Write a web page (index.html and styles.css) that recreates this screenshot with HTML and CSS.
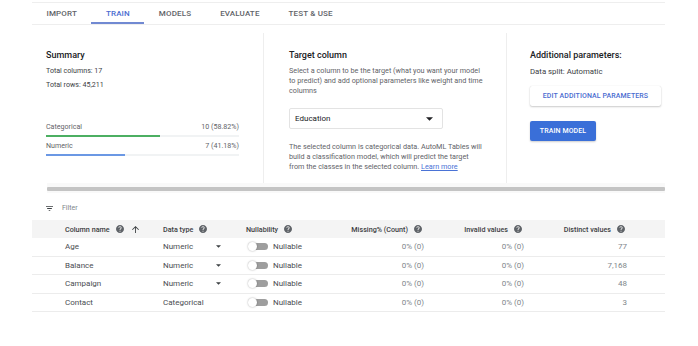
FILE: index.html
```html
<!DOCTYPE html>
<html>
<head>
<meta charset="utf-8">
<link rel="stylesheet" href="styles.css">
</head>
<body>
<div class="page">
  <nav class="tabs">
    <div class="tab">IMPORT</div>
    <div class="tab active">TRAIN</div>
    <div class="tab">MODELS</div>
    <div class="tab">EVALUATE</div>
    <div class="tab">TEST &amp; USE</div>
  </nav>

  <section class="panels">
    <div class="panel summary">
      <div class="title">Summary</div>
      <div class="meta m1">Total columns: 17</div>
      <div class="meta m2">Total rows: 45,211</div>
      <div class="stat s1"><span>Categorical</span><span>10 (58.82%)</span></div>
      <div class="bar"><div class="fill green" style="width:58.82%"></div></div>
      <div class="stat s2"><span>Numeric</span><span>7 (41.18%)</span></div>
      <div class="bar"><div class="fill blue" style="width:41.18%"></div></div>
    </div>

    <div class="panel target">
      <div class="title">Target column</div>
      <p class="desc d1">Select a column to be the target (what you want your model to predict) and add optional parameters like weight and time columns</p>
      <div class="select">
        <span>Education</span>
        <svg class="caret" viewBox="7 10 10 5" width="7" height="4"><path d="M7 10l5 5 5-5z"/></svg>
      </div>
      <p class="desc d2">The selected column is categorical data. AutoML Tables will build a classification model, which will predict the target from the classes in the selected column. <a class="link">Learn more</a></p>
    </div>

    <div class="panel params">
      <div class="title">Additional parameters:</div>
      <div class="meta split">Data split: Automatic</div>
      <div class="btn outline">EDIT ADDITIONAL PARAMETERS</div>
      <div class="btn primary">TRAIN MODEL</div>
    </div>
  </section>

  <div class="scroll"><div class="thumb"></div></div>

  <div class="filter">
    <svg viewBox="3 6 18 12" width="7" height="5"><path d="M10 18h4v-2h-4v2zM3 6v2h18V6H3zm3 7h12v-2H6v2z"/></svg>
    <span>Filter</span>
  </div>

  <div class="table">
    <div class="thead">
      <div class="th">Column name
        <svg class="help" viewBox="2 2 20 20"><path d="M12 2C6.48 2 2 6.48 2 12s4.48 10 10 10 10-4.48 10-10S17.52 2 12 2zm1 17h-2v-2h2v2zm2.07-7.75l-.9.92C13.45 12.9 13 13.5 13 15h-2v-.5c0-1.1.45-2.1 1.170-2.83l1.24-1.26c.37-.36.59-.86.59-1.41 0-1.1-.9-2-2-2s-2 .9-2 2H8c0-2.21 1.79-4 4-4s4 1.79 4 4c0 .88-.36 1.68-.93 2.25z"/></svg>
        <svg class="arrow" viewBox="4 4 16 16"><path d="M4 12l1.410 1.41L11 7.830V20h2V7.830l5.580 5.59L20 12l-8-8-8 8z"/></svg>
      </div>
      <div class="th">Data type
        <svg class="help" viewBox="2 2 20 20"><path d="M12 2C6.48 2 2 6.48 2 12s4.48 10 10 10 10-4.48 10-10S17.52 2 12 2zm1 17h-2v-2h2v2zm2.07-7.75l-.9.92C13.45 12.9 13 13.5 13 15h-2v-.5c0-1.1.45-2.1 1.170-2.83l1.24-1.26c.37-.36.59-.86.59-1.41 0-1.1-.9-2-2-2s-2 .9-2 2H8c0-2.21 1.79-4 4-4s4 1.790 4 4c0 .88-.36 1.68-.93 2.25z"/></svg>
      </div>
      <div class="th">Nullability
        <svg class="help" viewBox="2 2 20 20"><path d="M12 2C6.48 2 2 6.48 2 12s4.48 10 10 10 10-4.48 10-10S17.52 2 12 2zm1 17h-2v-2h2v2zm2.07-7.75l-.9.92C13.45 12.9 13 13.5 13 15h-2v-.5c0-1.1.45-2.1 1.170-2.83l1.24-1.26c.37-.36.59-.86.59-1.41 0-1.1-.9-2-2-2s-2 .9-2 2H8c0-2.21 1.79-4 4-4s4 1.79 4 4c0 .88-.36 1.68-.93 2.25z"/></svg>
      </div>
      <div class="th right">Missing% (Count)
        <svg class="help" viewBox="2 2 20 20"><path d="M12 2C6.48 2 2 6.48 2 12s4.48 10 10 10 10-4.48 10-10S17.52 2 12 2zm1 17h-2v-2h2v2zm2.07-7.75l-.9.92C13.45 12.9 13 13.5 13 15h-2v-.5c0-1.1.45-2.1 1.170-2.83l1.24-1.26c.37-.36.59-.86.59-1.41 0-1.1-.9-2-2-2s-2 .9-2 2H8c0-2.21 1.79-4 4-4s4 1.79 4 4c0 .88-.36 1.68-.93 2.25z"/></svg>
      </div>
      <div class="th right">Invalid values
        <svg class="help" viewBox="2 2 20 20"><path d="M12 2C6.48 2 2 6.48 2 12s4.48 10 10 10 10-4.48 10-10S17.52 2 12 2zm1 17h-2v-2h2v2zm2.07-7.75l-.9.92C13.45 12.9 13 13.5 13 15h-2v-.5c0-1.1.45-2.1 1.170-2.83l1.24-1.26c.37-.36.59-.86.59-1.41 0-1.1-.9-2-2-2s-2 .9-2 2H8c0-2.21 1.79-4 4-4s4 1.79 4 4c0 .88-.36 1.68-.93 2.25z"/></svg>
      </div>
      <div class="th right">Distinct values
        <svg class="help" viewBox="2 2 20 20"><path d="M12 2C6.48 2 2 6.48 2 12s4.48 10 10 10 10-4.48 10-10S17.52 2 12 2zm1 17h-2v-2h2v2zm2.07-7.75l-.9.92C13.45 12.9 13 13.5 13 15h-2v-.5c0-1.1.45-2.1 1.170-2.83l1.24-1.26c.37-.36.59-.86.59-1.41 0-1.1-.9-2-2-2s-2 .9-2 2H8c0-2.21 1.79-4 4-4s4 1.79 4 4c0 .88-.36 1.68-.93 2.25z"/></svg>
      </div>
    </div>

    <div class="row">
      <div class="name">Age</div>
      <div class="dtype"><span>Numeric</span><svg viewBox="7 10 10 5" width="5" height="3"><path d="M7 10l5 5 5-5z"/></svg></div>
      <div class="null"><span class="toggle"><span class="knob"></span><span class="track"></span></span><span>Nullable</span></div>
      <div class="num">0% (0)</div>
      <div class="num">0% (0)</div>
      <div class="num">77</div>
    </div>
    <div class="row">
      <div class="name">Balance</div>
      <div class="dtype"><span>Numeric</span><svg viewBox="7 10 10 5" width="5" height="3"><path d="M7 10l5 5 5-5z"/></svg></div>
      <div class="null"><span class="toggle"><span class="knob"></span><span class="track"></span></span><span>Nullable</span></div>
      <div class="num">0% (0)</div>
      <div class="num">0% (0)</div>
      <div class="num">7,168</div>
    </div>
    <div class="row">
      <div class="name">Campaign</div>
      <div class="dtype"><span>Numeric</span><svg viewBox="7 10 10 5" width="5" height="3"><path d="M7 10l5 5 5-5z"/></svg></div>
      <div class="null"><span class="toggle"><span class="knob"></span><span class="track"></span></span><span>Nullable</span></div>
      <div class="num">0% (0)</div>
      <div class="num">0% (0)</div>
      <div class="num">48</div>
    </div>
    <div class="row">
      <div class="name">Contact</div>
      <div class="dtype"><span>Categorical</span></div>
      <div class="null"><span class="toggle"><span class="knob"></span><span class="track"></span></span><span>Nullable</span></div>
      <div class="num">0% (0)</div>
      <div class="num">0% (0)</div>
      <div class="num">3</div>
    </div>
  </div>
</div>
</body>
</html>
```

FILE: styles.css
```css
* { box-sizing: border-box; }

body {
  margin: 0;
  background: #ffffff;
  color: #3c4043;
  font-family: Roboto, "Noto Sans", "Liberation Sans", sans-serif;
}

.page {
  width: 665px;
  padding-left: 32px;
}

/* Tabs */
.tabs {
  display: flex;
  height: 23px;
  margin-top: 2px;
  border-top: 1px solid #eeeeee;
  border-bottom: 1px solid #eeeeee;
}

.tab {
  display: flex;
  align-items: center;
  padding: 1px 14.5px 0;
  font-size: 8px;
  font-weight: 500;
  letter-spacing: 0.15px;
  color: #5f6368;
  border-bottom: 2px solid transparent;
}

.tab.active {
  color: #4a6cd0;
  border-bottom-color: #7189d2;
}

/* Panels */
.panels {
  display: grid;
  grid-template-columns: 231px 243px 159px;
  height: 150px;
  margin-top: 8px;
}

.panel {
  padding-top: 16px;
}

.summary {
  padding-left: 14px;
  padding-right: 24px;
}

.target {
  padding-left: 25px;
  border-left: 1px solid #eeeeee;
}

.params {
  padding-left: 23px;
  border-left: 1px solid #eeeeee;
}

.title {
  font-size: 9px;
  line-height: 12px;
  font-weight: 500;
  color: #202124;
}

.meta {
  font-size: 7.1px;
  line-height: 10px;
  color: #3c4043;
}

.m1 { margin-top: 5px; }
.m2 { margin-top: 4px; }

.stat {
  display: flex;
  justify-content: space-between;
  font-size: 7.1px;
  line-height: 10px;
  color: #5f6368;
}

.s1 { margin-top: 32px; }
.s2 { margin-top: 4px; }

.bar {
  height: 2px;
  margin-top: 3px;
  background: #f1f3f4;
}

.fill { height: 100%; }
.green { background: #4caf62; }
.blue { background: #6b98e4; }

.desc {
  margin: 0;
  width: 194px;
  font-size: 7.25px;
  line-height: 9.8px;
  color: #5f6368;
}

.d1 { margin-top: 5px; }
.d2 { margin-top: 13px; }

.link {
  color: #4a73d6;
  text-decoration: underline;
}

.select {
  display: flex;
  align-items: center;
  justify-content: space-between;
  width: 154px;
  height: 21px;
  margin-top: 13px;
  padding: 0 9px 0 5px;
  border: 1px solid #e3e3e3;
  border-radius: 2px;
  font-size: 8px;
  color: #202124;
}

.caret { fill: #202124; }

.split {
  margin-top: 6px;
  font-size: 7.8px;
}

.btn {
  display: flex;
  align-items: center;
  justify-content: center;
  height: 20px;
  font-size: 7px;
  font-weight: 500;
  letter-spacing: 0.1px;
  border-radius: 2px;
}

.outline {
  width: 131px;
  margin-top: 9px;
  color: #4a6cd0;
  background: #ffffff;
  box-shadow: 0 1px 2px rgba(0, 0, 0, 0.2), 0 0 1px rgba(0, 0, 0, 0.15);
}

.primary {
  width: 66px;
  margin-top: 15px;
  color: #ffffff;
  background: #3a6fd8;
  box-shadow: 0 1px 2px rgba(0, 0, 0, 0.2);
}

/* Scrollbar */
.scroll {
  height: 10px;
  margin-left: 15px;
  padding-top: 4px;
  background: #f9f9f9;
}

.thumb {
  height: 4px;
  background: #c4c4c4;
  border-radius: 1px;
}

/* Filter */
.filter {
  display: flex;
  align-items: center;
  gap: 9px;
  height: 14px;
  margin-top: 8px;
  padding-left: 14px;
  font-size: 7px;
  color: #80868b;
}

.filter svg { fill: #3c4043; }

/* Table */
.table { margin-top: 5px; }

.thead, .row {
  display: grid;
  grid-template-columns: 98px 83px 80px 98px 100px 103px;
  align-items: center;
  padding-left: 33px;
  padding-right: 38px;
}

.thead {
  height: 18px;
  background: #f4f4f4;
  font-size: 7.2px;
  font-weight: 500;
  color: #3c4043;
}

.th {
  display: flex;
  align-items: center;
  gap: 6px;
  white-space: nowrap;
}

.th.right {
  justify-content: flex-end;
  padding-right: 2px;
}

.help {
  width: 8px;
  height: 8px;
  fill: #5f6368;
}

.arrow {
  width: 7px;
  height: 7px;
  fill: #3c4043;
  margin-left: 2px;
}

.row {
  height: 18.5px;
  border-bottom: 1px solid #ececec;
  font-size: 8px;
  color: #5f6368;
}

.name { color: #4a4d52; }

.dtype {
  display: flex;
  align-items: center;
  justify-content: space-between;
  width: 58px;
  color: #4a4d52;
}

.dtype svg { fill: #3c4043; }

.null {
  display: flex;
  align-items: center;
  gap: 5px;
  padding-left: 2px;
  color: #4a4d52;
}

.toggle {
  display: flex;
  align-items: center;
  width: 20px;
  height: 9px;
}

.knob {
  width: 9px;
  height: 9px;
  border-radius: 50%;
  background: #ffffff;
  box-shadow: 0 0 2px rgba(0, 0, 0, 0.35);
  z-index: 1;
}

.track {
  width: 14px;
  height: 7px;
  margin-left: -3px;
  background: #9e9e9e;
  border-radius: 0 4px 4px 0;
}

.num {
  text-align: right;
  color: #80868b;
}
```
